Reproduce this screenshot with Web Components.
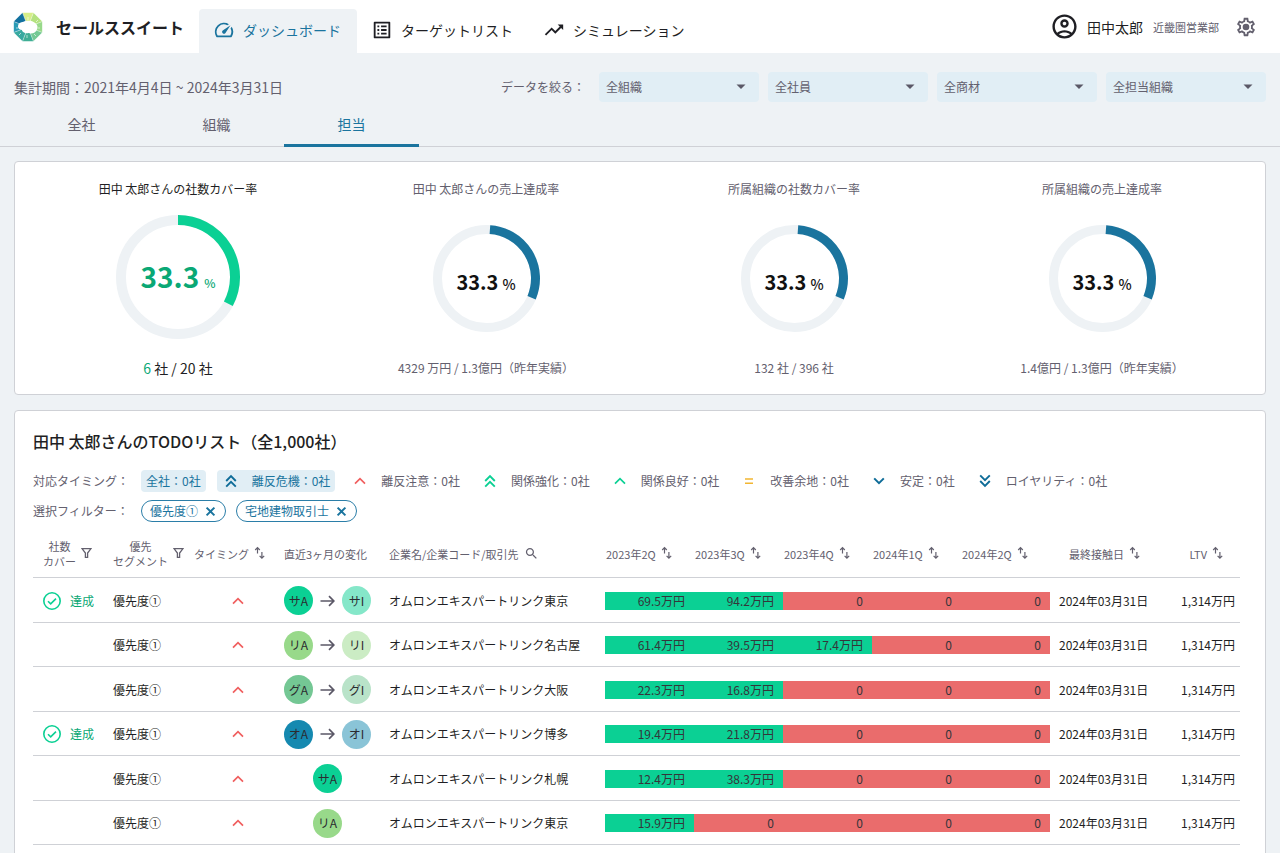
<!DOCTYPE html>
<html lang="ja">
<head>
<meta charset="utf-8">
<meta name="viewport" content="width=device-width, initial-scale=1">
<title>セールススイート</title>
<style>
  html { scrollbar-width: none; }
  body {
    margin: 0;
    background: #eef2f5;
    color: #1f1f24;
    font-family: "Noto Sans CJK JP", "Noto Sans", sans-serif;
    font-size: 12px;
    line-height: 18px;
    --ink: #1f1f24;
    --muted: #63606e;
    --blue: #1a749e;
    --green: #0bd094;
    --green-text: #0aa875;
    --red: #ea6c6c;
    --line: #cfd1d6;
    --page: #eef2f5;
    --tint: #e1eef5;
  }
</style>
</head>
<body>
<app-shell></app-shell>

<script>
const base = `<style>
  *, *::before, *::after { box-sizing: border-box; }
  button, select { font: inherit; color: inherit; margin: 0; padding: 0; border: 0; background: none; cursor: pointer; }
  a { color: inherit; text-decoration: none; }
</style>`;

function define(name, html, setup) {
  const template = document.createElement('template');
  template.innerHTML = base + html;
  customElements.define(name, class extends HTMLElement {
    constructor() {
      super();
      this.attachShadow({ mode: 'open' }).append(template.content.cloneNode(true));
    }
    connectedCallback() {
      if (setup && !this.ready) { this.ready = true; setup(this, this.shadowRoot); }
    }
  });
}

/* ---------- icons ---------- */
const fill = d => `<path fill="currentColor" d="${d}"/>`;
const line = (d, w) => `<path fill="none" stroke="currentColor" stroke-width="${w}" d="${d}"/>`;
const ICONS = {
  speed: [22, 22, '0 0 24 24', fill('M20.38 8.57l-1.23 1.85a8 8 0 0 1-.22 7.58H5.07A8 8 0 0 1 15.58 6.85l1.85-1.23A10 10 0 0 0 3.35 19a2 2 0 0 0 1.72 1h13.85a2 2 0 0 0 1.74-1 10 10 0 0 0-.27-10.44zm-9.79 6.84a2 2 0 0 0 2.83 0l5.66-8.49-8.49 5.66a2 2 0 0 0 0 2.83z')],
  list: [22, 22, '0 0 24 24', fill('M19 5v14H5V5h14m1.1-2H3.9c-.5 0-.9.4-.9.9v16.2c0 .4.4.9.9.9h16.2c.4 0 .9-.5.9-.9V3.9c0-.5-.5-.9-.9-.9zM11 7h6v2h-6V7zm0 4h6v2h-6v-2zm0 4h6v2h-6zM7 7h2v2H7zm0 4h2v2H7zm0 4h2v2H7z')],
  trend: [22, 22, '0 0 24 24', fill('m16 6 2.29 2.29-4.88 4.88-4-4L2 16.59 3.41 18l6-6 4 4 6.3-6.29L22 12V6z')],
  user: [29, 29, '0 0 24 24', fill('M12 2C6.48 2 2 6.48 2 12s4.48 10 10 10 10-4.48 10-10S17.52 2 12 2zM7.35 18.5C8.66 17.56 10.26 17 12 17s3.34.56 4.65 1.5c-1.31.94-2.91 1.5-4.65 1.5s-3.34-.56-4.65-1.5zm10.79-1.38C16.45 15.8 14.32 15 12 15s-4.45.8-6.14 2.12C4.7 15.73 4 13.95 4 12c0-4.42 3.58-8 8-8s8 3.58 8 8c0 1.95-.7 3.73-1.86 5.12zM12 6c-1.93 0-3.5 1.57-3.5 3.5S10.07 13 12 13s3.5-1.57 3.5-3.5S13.93 6 12 6zm0 5c-.83 0-1.5-.67-1.5-1.5S11.17 8 12 8s1.5.67 1.5 1.5S12.83 11 12 11z')],
  gear: [22, 22, '0 0 24 24', fill('M19.43 12.98c.04-.32.07-.64.07-.98 0-.34-.03-.66-.07-.98l2.11-1.65c.19-.15.24-.42.12-.64l-2-3.46c-.09-.16-.26-.25-.44-.25-.06 0-.12.01-.17.03l-2.49 1c-.52-.4-1.08-.73-1.69-.98l-.38-2.65C14.46 2.18 14.25 2 14 2h-4c-.25 0-.46.18-.49.42l-.38 2.65c-.61.25-1.17.59-1.69.98l-2.49-1c-.06-.02-.12-.03-.18-.03-.17 0-.34.09-.43.25l-2 3.46c-.13.22-.07.49.12.64l2.11 1.65c-.04.32-.07.65-.07.98 0 .33.03.66.07.98l-2.11 1.65c-.19.15-.24.42-.12.64l2 3.46c.09.16.26.25.44.25.06 0 .12-.01.17-.03l2.49-1c.52.4 1.08.73 1.69.98l.38 2.65c.03.24.24.42.49.42h4c.25 0 .46-.18.49-.42l.38-2.65c.61-.25 1.17-.59 1.69-.98l2.49 1c.06.02.12.03.18.03.17 0 .34-.09.43-.25l2-3.46c.12-.22.07-.49-.12-.64l-2.11-1.65zm-1.98-1.71c.04.31.05.52.05.73 0 .21-.02.43-.05.73l-.14 1.13.89.7 1.08.84-.7 1.21-1.27-.51-1.04-.42-.9.68c-.43.32-.84.56-1.25.73l-1.06.43-.16 1.13-.2 1.35h-1.4l-.19-1.35-.16-1.13-1.06-.43c-.43-.18-.83-.41-1.23-.71l-.91-.7-1.06.43-1.27.51-.7-1.21 1.08-.84.89-.7-.14-1.13c-.03-.31-.05-.54-.05-.74s.02-.43.05-.73l.14-1.13-.89-.7-1.08-.84.7-1.21 1.27.51 1.04.42.9-.68c.43-.32.84-.56 1.25-.73l1.06-.43.16-1.13.2-1.35h1.39l.19 1.35.16 1.13 1.06.43c.43.18.83.41 1.23.71l.91.7 1.06-.43 1.27-.51.7 1.21-1.07.85-.89.7.14 1.13z') + '<circle cx="12" cy="12" r="3.6" fill="currentColor"/>'],
  caret: [10, 6, '0 0 10 6', fill('M.5.5h9L5 5z')],
  up: [12, 12, '0 0 12 12', line('M1 8.7 6 3.7l5 5', 1.7)],
  up2: [12, 14, '0 0 12 14', line('M1.2 7 6 2.2 10.8 7M1.2 12.6 6 7.8l4.8 4.8', 1.9)],
  down: [12, 12, '0 0 12 12', line('M1.2 3.4 6 8.2l4.8-4.8', 2)],
  down2: [12, 14, '0 0 12 14', line('M1.2 1.4 6 6.2l4.8-4.8M1.2 7 6 11.8 10.8 7', 1.9)],
  equal: [12, 12, '0 0 12 12', line('M2 4h8M2 8.2h8', 1.5)],
  close: [11, 11, '0 0 11 11', line('M1.6 1.6 9.4 9.4M9.4 1.6 1.6 9.4', 2)],
  filter: [11, 14, '0 0 11 14', line('M1 1.6h9L6.6 6v4.4H4.4V6z', 1.3)],
  sort: [11, 16, '0 0 11 16', line('M3.5 7.5V1.6M1.2 4 3.5 1.6 5.8 4M7.9 6v6.2M5.6 9.9l2.3 2.3 2.3-2.3', 1.2)],
  search: [15, 17, '0 0 24 27', fill('M15.5 14h-.79l-.28-.27C15.41 12.59 16 11.11 16 9.5 16 5.91 13.09 3 9.5 3S3 5.91 3 9.5 5.91 16 9.5 16c1.61 0 3.09-.59 4.23-1.57l.27.28v.79l5 4.99L20.49 19l-4.99-5zm-6 0C7.01 14 5 11.99 5 9.5S7.01 5 9.5 5 14 7.01 14 9.5 11.99 14 9.5 14z')],
  arrow: [15, 12, '0 0 15 12', line('M.5 6H13.6M9 1.2 13.8 6 9 10.8', 1.7)],
  check: [20, 20, '0 0 20 20', '<circle cx="10" cy="10" r="8.2" fill="none" stroke="currentColor" stroke-width="1.6"/>' + line('M6 10.2 8.7 12.9 14 7.6', 1.6)]
};
define('app-icon', `<style>
  :host { display: inline-flex; flex: none; align-items: center; justify-content: center; }
  svg { display: block; }
</style><span></span>`, (el, root) => {
  const [w, h, box, body] = ICONS[el.getAttribute('name')];
  root.querySelector('span').innerHTML = `<svg width="${w}" height="${h}" viewBox="${box}" aria-hidden="true">${body}</svg>`;
});

/* ---------- header ---------- */
define('brand-logo', `<style>
  :host { display: flex; align-items: center; gap: 13px; font-size: 16px; line-height: 24px; font-weight: 700; }
  svg { display: block; }
</style>
<svg width="30" height="30" viewBox="0 0 30 30" aria-hidden="true">
  <path fill="#d6ee88" d="M15 15 9.6.8h10.8z"/>
  <path fill="#b4e27f" d="M15 15 20.4.8l8.8 8.8z"/>
  <path fill="#98d98a" d="M15 15 29.2 9.6v10.8z"/>
  <path fill="#74c894" d="M15 15l14.2 5.4-8.8 8.8z"/>
  <path fill="#3fae95" d="M15 15l5.4 14.2H9.6z"/>
  <path fill="#38a9a0" d="M15 15 9.6 29.2.8 20.4z"/>
  <path fill="#2a9bb5" d="M15 15 .8 20.4V9.6z"/>
  <path fill="#12719f" d="M15 15 .8 9.6 9.6.8z"/>
  <path stroke="#fff" stroke-width=".4" d="M15 15 9.6.8M15 15 20.4.8M15 15 29.2 9.6M15 15l14.2 5.4M15 15l5.4 14.2M15 15 9.6 29.2M15 15 .8 20.4M15 15 .8 9.6"/>
  <path stroke="#fff" stroke-width=".6" d="M15 8V5M23 10l2-2M25 16h2M21 22l2 2M14 23v3M8 21l-2 2M5 16H3"/>
  <path fill="#fff" d="M5 14c.2-2.5 2.500-4 5.500-4.300C13 8.600 18 8.200 21 10.200c3.400 1.600 4.400 5.200 2.800 7.600-1 3-4.900 4.400-8.300 3.200-3.200.8-6-.6-6.800-3.200C6.300 17.600 4.700 16.200 5 14z"/>
</svg>
<slot></slot>`);

define('nav-item', `<style>
  :host { display: block; }
  a { display: flex; align-items: center; gap: 8px; height: 44px; padding: 0 16px 2px 14px; border-radius: 4px 4px 0 0; font-size: 14px; line-height: 20px; }
  :host([current]) a { background: var(--page); color: var(--blue); }
</style>
<a href="#"><slot name="icon"></slot><span><slot></slot></span></a>`, (el, root) => {
  if (el.hasAttribute('current')) root.querySelector('a').setAttribute('aria-current', 'page');
});

define('app-header', `<style>
  :host { display: block; background: #fff; }
  header { display: flex; align-items: center; height: 53px; padding: 0 23px 0 13px; }
  nav { display: flex; align-self: flex-end; margin-left: 15px; }
  .user { display: flex; align-items: center; margin-left: auto; }
  .name { margin-left: 8px; font-size: 14px; line-height: 20px; }
  .dept { margin-left: 10px; font-size: 11px; color: var(--muted); }
  button { display: flex; margin-left: 16px; color: var(--muted); }
</style>
<header>
  <brand-logo>セールススイート</brand-logo>
  <nav>
    <nav-item current><app-icon slot="icon" name="speed"></app-icon>ダッシュボード</nav-item>
    <nav-item><app-icon slot="icon" name="list"></app-icon>ターゲットリスト</nav-item>
    <nav-item><app-icon slot="icon" name="trend"></app-icon>シミュレーション</nav-item>
  </nav>
  <div class="user">
    <app-icon name="user"></app-icon>
    <span class="name">田中太郎</span>
    <span class="dept">近畿圏営業部</span>
    <button type="button" aria-label="設定"><app-icon name="gear"></app-icon></button>
  </div>
</header>`);

/* ---------- filters and tabs ---------- */
define('filter-select', `<style>
  :host { display: block; position: relative; width: 160px; }
  select { appearance: none; width: 100%; height: 30px; padding: 0 28px 0 7px; border-radius: 4px; background: var(--tint); color: var(--muted); font-size: 12px; }
  app-icon { position: absolute; right: 13px; top: 12px; pointer-events: none; color: #5b5867; }
</style>
<select><option></option></select><app-icon name="caret"></app-icon>`, (el, root) => {
  root.querySelector('option').textContent = el.getAttribute('value');
  root.querySelector('select').setAttribute('aria-label', el.getAttribute('value'));
});

define('scope-bar', `<style>
  :host { display: block; border-bottom: 1px solid var(--line); color: var(--muted); }
  .row { display: flex; align-items: center; gap: 9px; padding: 19px 14px 0; }
  .period { margin-right: auto; font-size: 14px; line-height: 20px; }
  .label { margin-right: 5px; }
  .tabs { display: flex; margin: 3px 14px -1px; }
  .tabs button { width: 135px; height: 42px; padding-bottom: 1px; font-size: 14px; line-height: 20px; border-bottom: 3px solid transparent; }
  .tabs button[aria-selected=true] { color: var(--blue); border-color: var(--blue); }
</style>
<div class="row">
  <span class="period">集計期間：2021年4月4日 ~ 2024年3月31日</span>
  <span class="label">データを絞る：</span>
  <filter-select value="全組織"></filter-select>
  <filter-select value="全社員"></filter-select>
  <filter-select value="全商材"></filter-select>
  <filter-select value="全担当組織"></filter-select>
</div>
<div class="tabs" role="tablist">
  <button type="button" role="tab" aria-selected="false">全社</button>
  <button type="button" role="tab" aria-selected="false">組織</button>
  <button type="button" role="tab" aria-selected="true">担当</button>
</div>`);

/* ---------- cards ---------- */
define('app-card', `<style>
  :host { display: block; background: #fff; border: 1px solid var(--line); border-radius: 4px; }
</style><slot></slot>`);

define('kpi-ring', `<style>
  :host { display: flex; flex-direction: column; align-items: center; color: var(--muted); }
  .ring { display: grid; place-items: center; height: 124px; margin: 17px 0 19px; }
  .ring > * { grid-area: 1 / 1; }
  svg { display: block; }
  :host(:not([main])) svg { margin-top: 2px; }
  .value { display: flex; align-items: baseline; gap: 4px; padding-top: 12px; color: #111; font-weight: 500; font-size: 14px; line-height: 28px; }
  b { font-size: 20px; line-height: 28px; }
  .foot { font-size: 12px; line-height: 20px; }
  :host([main]) .title, :host([main]) .foot { color: var(--ink); }
  :host([main]) .value { color: var(--green-text); font-size: 12px; line-height: 40px; padding-top: 4px; gap: 5px; }
  :host([main]) b { font-size: 28px; line-height: 40px; }
  :host([main]) .foot { font-size: 14px; }
</style>
<span class="title"><slot name="title"></slot></span>
<div class="ring"><svg aria-hidden="true"></svg><div class="value"><b>33.3</b>%</div></div>
<div class="foot"><slot></slot></div>`, (el, root) => {
  const main = el.hasAttribute('main');
  const size = main ? 124 : 107, w = main ? 10 : 9, c = size / 2, r = c - w / 2;
  const [from, to] = main ? [0, 118] : [4, 113];
  const at = deg => {
    const a = deg * Math.PI / 180;
    return `${(c + r * Math.sin(a)).toFixed(2)} ${(c - r * Math.cos(a)).toFixed(2)}`;
  };
  const svg = root.querySelector('svg');
  svg.setAttribute('width', size);
  svg.setAttribute('height', size);
  svg.innerHTML = `<g fill="none" stroke-width="${w}">
    <circle cx="${c}" cy="${c}" r="${r}" stroke="#eef2f5"/>
    <path d="M${at(from)}A${r} ${r} 0 0 1 ${at(to)}" stroke="${main ? '#0bd094' : '#1a749e'}"/></g>`;
});

define('kpi-panel', `<style>
  :host { display: grid; grid-template-columns: repeat(4, 1fr); padding: 18px 9px 16px; }
  em { font-style: normal; color: var(--green-text); }
</style>
<kpi-ring main><span slot="title">田中 太郎さんの社数カバー率</span><em>6</em> 社 / 20 社</kpi-ring>
<kpi-ring><span slot="title">田中 太郎さんの売上達成率</span>4329 万円 / 1.3億円（昨年実績）</kpi-ring>
<kpi-ring><span slot="title">所属組織の社数カバー率</span>132 社 / 396 社</kpi-ring>
<kpi-ring><span slot="title">所属組織の売上達成率</span>1.4億円 / 1.3億円（昨年実績）</kpi-ring>`);

/* ---------- to-do list ---------- */
define('timing-chip', `<style>
  :host { display: block; color: var(--muted); }
  button { display: flex; align-items: center; height: 22px; padding: 0 5px; border-radius: 4px; }
  :host([active]) { color: var(--blue); }
  :host([active]) button { background: var(--tint); }
  app-icon { width: 18px; margin-right: 12px; }
</style>
<button type="button"><slot></slot></button>`, (el, root) => {
  const name = el.getAttribute('icon');
  if (!name) return;
  const icon = document.createElement('app-icon');
  icon.setAttribute('name', name);
  icon.style.color = el.getAttribute('tone');
  root.querySelector('button').prepend(icon);
});

define('filter-tag', `<style>
  :host { display: block; color: var(--blue); }
  button { display: flex; align-items: center; gap: 7px; height: 22px; padding: 0 9px 0 8px; border: 1px solid #2b7ea8; border-radius: 11px; }
</style>
<button type="button"><span><slot></slot></span><app-icon name="close"></app-icon></button>`);

define('segment-dot', `<style>
  :host { display: grid; place-items: center; width: 29px; height: 29px; border-radius: 50%; color: #2b2b30; }
</style><slot></slot>`);

const DOTS = { 'サA': '#0bd094', 'サI': '#85e7c9', 'リA': '#98d98a', 'リI': '#cbecc4', 'グA': '#74c794', 'グI': '#b9e3c9', 'オA': '#1589b0', 'オI': '#8ac4d7' };
const ROWS = [
  { done: true, from: 'サA', to: 'サI', name: '東京', sales: ['69.5', '94.2', 0, 0, 0] },
  { from: 'リA', to: 'リI', name: '名古屋', sales: ['61.4', '39.5', '17.4', 0, 0] },
  { from: 'グA', to: 'グI', name: '大阪', sales: ['22.3', '16.8', 0, 0, 0] },
  { done: true, from: 'オA', to: 'オI', name: '博多', sales: ['19.4', '21.8', 0, 0, 0] },
  { from: 'サA', name: '札幌', sales: ['12.4', '38.3', 0, 0, 0] },
  { from: 'リA', name: '東京', sales: ['15.9', 0, 0, 0, 0] }
];
const dot = key => `<segment-dot style="background:${DOTS[key]}">${key}</segment-dot>`;

define('todo-table', `<style>
  :host { display: block; }
  table { width: 100%; table-layout: fixed; border-collapse: separate; border-spacing: 0; white-space: nowrap; }
  th, td { padding: 1px 0 0; border-bottom: 1px solid var(--line); text-align: left; font-weight: 400; }
  thead tr { height: 48px; }
  tbody tr { height: 45px; }
  tbody tr:nth-child(odd of :not(:first-child)) { height: 44px; }
  th { color: var(--muted); font-size: 11px; line-height: 15px; }
  th div { display: flex; align-items: center; gap: 5px; }
  th button { display: flex; }
  th span { text-align: center; }
  .cover { width: 72px; padding-left: 10px; }
  .segment { width: 81px; padding-left: 8px; }
  .timing { width: 90px; padding-left: 8px; }
  td.timing { padding-left: 46px; color: #f05f5f; }
  .change { width: 104px; padding-left: 8px; }
  .name { padding-left: 9px; }
  .quarter { width: 89px; }
  th.quarter div { padding-left: 1px; }
  .date { width: 109px; padding-left: 9px; }
  th.date { padding-left: 19px; }
  .ltv { width: 81px; padding-right: 5px; text-align: right; }
  th.ltv div { justify-content: flex-end; padding-right: 12px; }
  .done { display: flex; align-items: center; gap: 8px; color: var(--green-text); }
  .done app-icon { color: var(--green); margin-left: -1px; }
  td app-icon { display: flex; justify-content: flex-start; }
  .dots { display: flex; align-items: center; justify-content: center; width: 87px; gap: 7px; color: #5b5867; }
  .bar { height: 18px; padding-right: 9px; text-align: right; background: var(--red); color: #35353a; }
  .bar.hit { background: var(--green); }
</style>
<table>
  <thead><tr>
    <th class="cover"><div><span>社数<br>カバー</span><button type="button" aria-label="絞り込み"><app-icon name="filter"></app-icon></button></div></th>
    <th class="segment"><div><span>優先<br>セグメント</span><button type="button" aria-label="絞り込み"><app-icon name="filter"></app-icon></button></div></th>
    <th class="timing"><div>タイミング<button type="button" aria-label="並べ替え"><app-icon name="sort"></app-icon></button></div></th>
    <th class="change">直近3ヶ月の変化</th>
    <th class="name"><div>企業名/企業コード/取引先<button type="button" aria-label="検索"><app-icon name="search"></app-icon></button></div></th>
  </tr></thead>
  <tbody></tbody>
</table>`, (el, root) => {
  const sortable = (cls, text) => `<th class="${cls}"><div>${text}<button type="button" aria-label="並べ替え"><app-icon name="sort"></app-icon></button></div></th>`;
  root.querySelector('thead tr').insertAdjacentHTML('beforeend',
    ['2023年2Q', '2023年3Q', '2023年4Q', '2024年1Q', '2024年2Q'].map(q => sortable('quarter', q)).join('') +
    sortable('date', '最終接触日') + sortable('ltv', 'LTV'));
  root.querySelector('tbody').innerHTML = ROWS.map(r => `<tr>
    <td class="cover">${r.done ? '<div class="done"><app-icon name="check"></app-icon>達成</div>' : ''}</td>
    <td class="segment">優先度①</td>
    <td class="timing"><app-icon name="up"></app-icon></td>
    <td class="change"><div class="dots">${dot(r.from)}${r.to ? '<app-icon name="arrow"></app-icon>' + dot(r.to) : ''}</div></td>
    <td class="name">オムロンエキスパートリンク${r.name}</td>
    ${r.sales.map(s => `<td class="quarter"><div class="bar${s ? ' hit' : ''}">${s ? s + '万円' : '0'}</div></td>`).join('')}
    <td class="date">2024年03月31日</td>
    <td class="ltv">1,314万円</td></tr>`).join('');
});

define('todo-panel', `<style>
  :host { display: block; padding: 18px 25px 30px 18px; }
  h2 { margin: 0 0 17px; font-size: 16px; line-height: 24px; font-weight: 500; }
  .row { display: flex; align-items: center; gap: 11px; margin-bottom: 8px; }
  .row.tags { gap: 10px; }
  .label { width: 97px; color: var(--muted); }
  .tags .label { width: 98px; }
</style>
<h2>田中 太郎さんのTODOリスト（全1,000社）</h2>
<div class="row">
  <span class="label">対応タイミング：</span>
  <timing-chip active>全社：0社</timing-chip>
  <timing-chip active icon="up2" tone="#0e6c98">離反危機：0社</timing-chip>
  <timing-chip icon="up" tone="#f05f5f">離反注意：0社</timing-chip>
  <timing-chip icon="up2" tone="#0bd094">関係強化：0社</timing-chip>
  <timing-chip icon="up" tone="#0bd094">関係良好：0社</timing-chip>
  <timing-chip icon="equal" tone="#f2b632">改善余地：0社</timing-chip>
  <timing-chip icon="down" tone="#0e6c98">安定：0社</timing-chip>
  <timing-chip icon="down2" tone="#0e6c98">ロイヤリティ：0社</timing-chip>
</div>
<div class="row tags">
  <span class="label">選択フィルター：</span>
  <filter-tag>優先度①</filter-tag>
  <filter-tag>宅地建物取引士</filter-tag>
</div>
<todo-table></todo-table>`);

define('app-shell', `<style>
  :host { display: block; }
  main { display: grid; gap: 15px; padding: 14px; }
</style>
<app-header></app-header>
<scope-bar></scope-bar>
<main>
  <app-card><kpi-panel></kpi-panel></app-card>
  <app-card><todo-panel></todo-panel></app-card>
</main>`);
</script>
</body>
</html>
